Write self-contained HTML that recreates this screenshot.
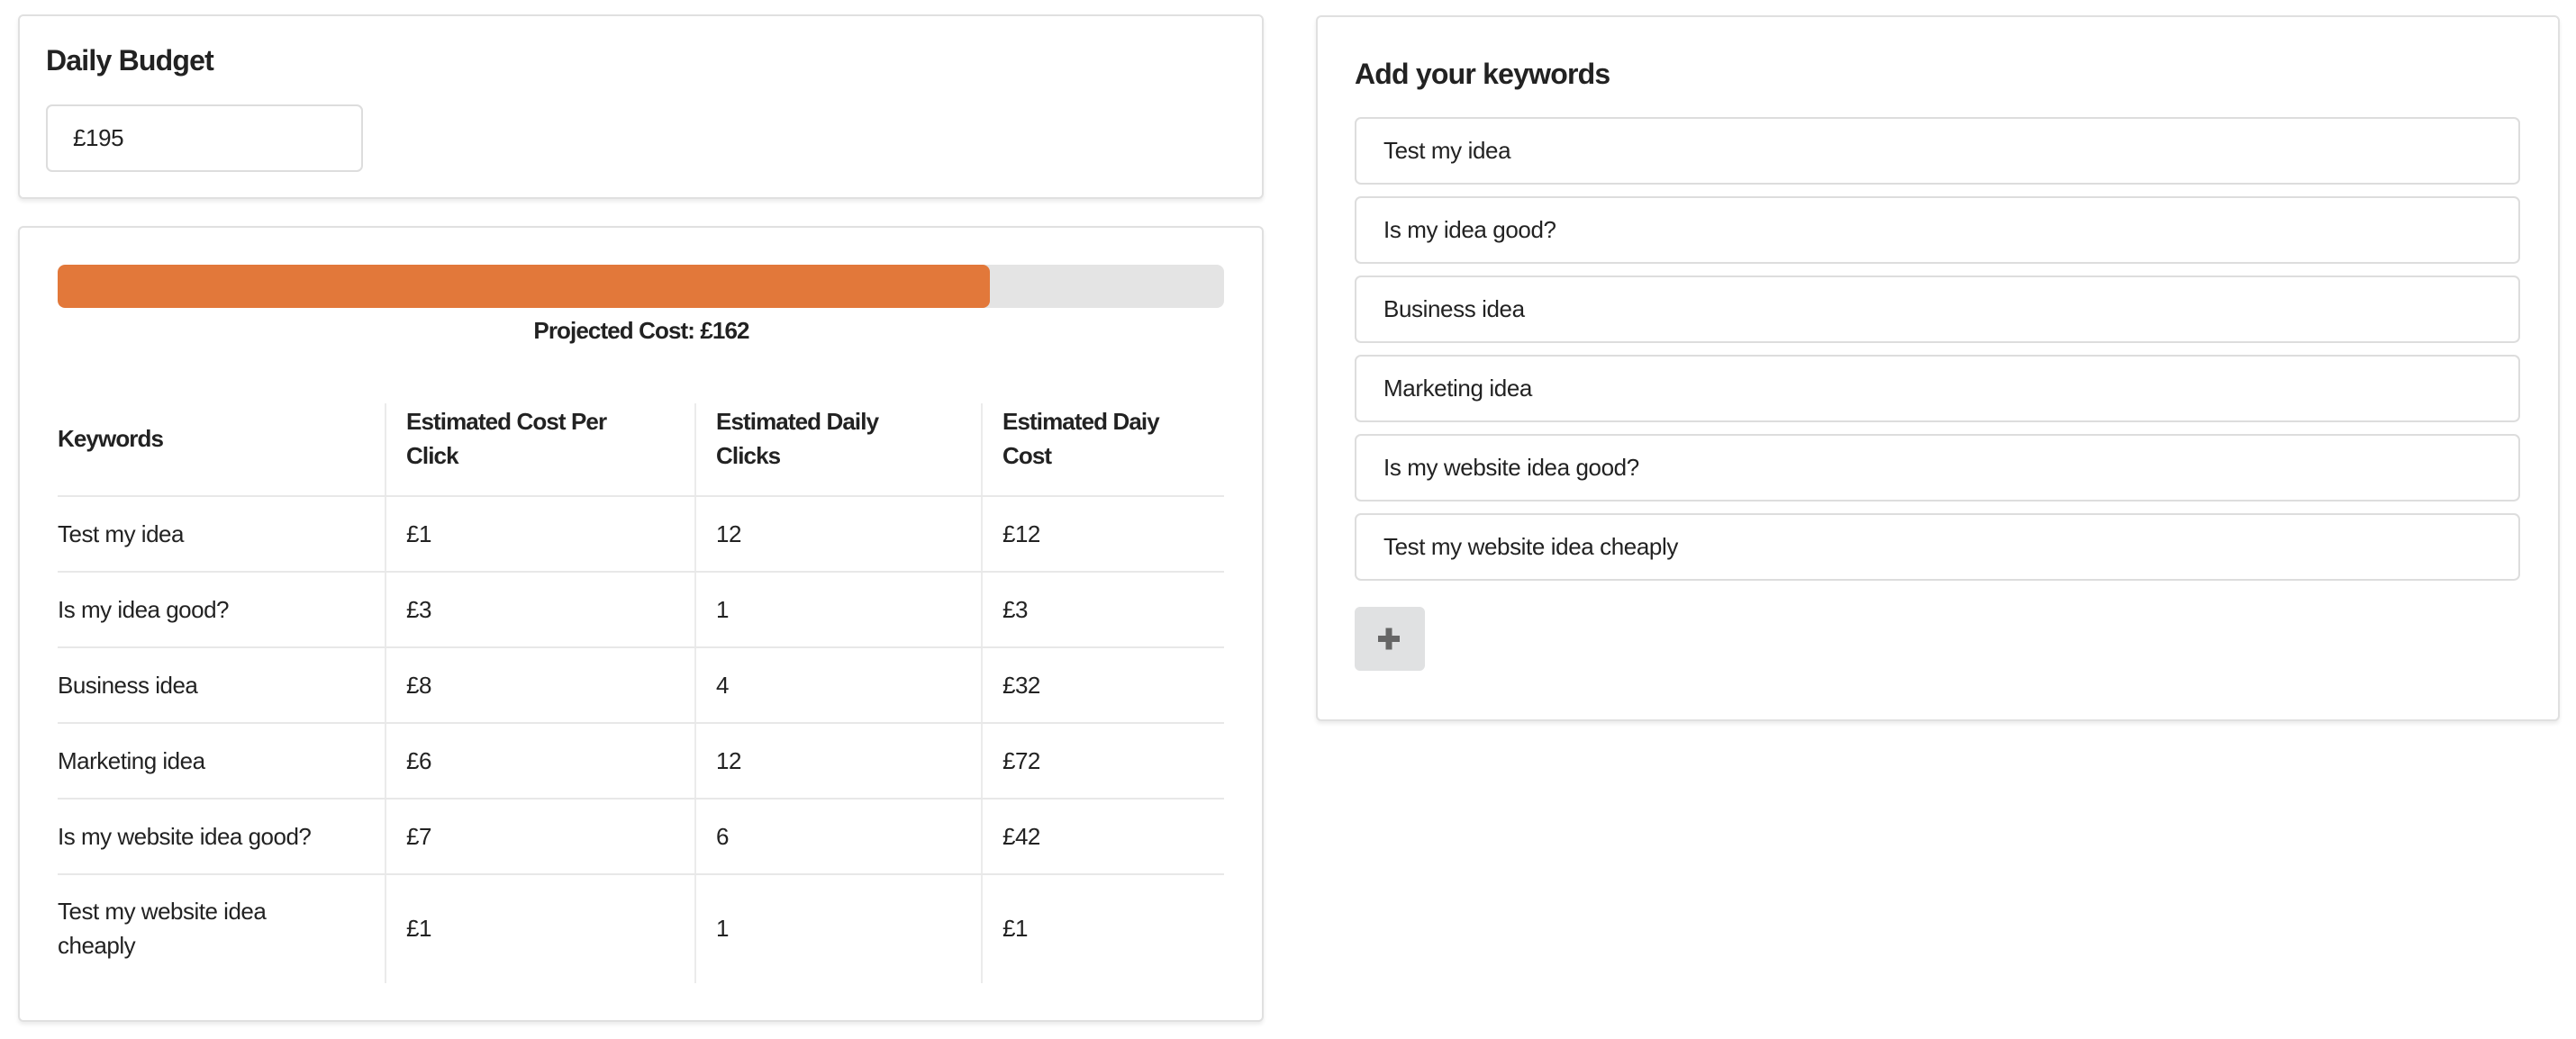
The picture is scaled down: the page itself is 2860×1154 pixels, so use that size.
<!DOCTYPE html>
<html><head><meta charset="utf-8"><style>
*{box-sizing:border-box;margin:0;padding:0}
body{width:2860px;height:1154px;background:#fff;font-family:"Liberation Sans",sans-serif;color:#222;position:relative;overflow:hidden}
.card{position:absolute;background:#fff;border:2px solid #e0e0e0;border-radius:6px;box-shadow:0 3px 4px rgba(0,0,0,0.08)}
.h{position:absolute;font-weight:bold;font-size:32px;letter-spacing:-0.8px;color:#222;line-height:1}
.inp{position:absolute;border:2px solid #ddd;border-radius:7px;background:#fff;font-size:26px;padding-left:30px;display:flex;align-items:center;color:#222;letter-spacing:-0.4px}
.bar{position:absolute;left:64px;top:294px;width:1295px;height:48px;background:#e4e4e4;border-radius:8px;overflow:hidden}
.bar div{width:1035px;height:100%;background:#e2783a;border-radius:8px}
.t{position:absolute;font-size:26px;line-height:38px;color:#222;letter-spacing:-0.5px}
.b{font-weight:bold;letter-spacing:-0.9px}
.hl{position:absolute;left:64px;width:1295px;height:2px;background:#e8e8e8}
.vl{position:absolute;width:2px;top:448px;height:644px;background:#ebebeb}
</style></head><body>
<div class="card" style="left:20px;top:16px;width:1383px;height:205px"></div>
<div class="h" style="left:51px;top:51px">Daily Budget</div>
<div class="inp" style="left:51px;top:116px;width:352px;height:75px;padding-left:28px">£195</div>

<div class="card" style="left:20px;top:251px;width:1383px;height:884px"></div>
<div class="bar"><div></div></div>
<div class="t b" style="left:0;width:1424px;text-align:center;top:348px">Projected Cost: £162</div>

<div class="vl" style="left:427px"></div>
<div class="vl" style="left:771px"></div>
<div class="vl" style="left:1089px"></div>
<div class="hl" style="top:550px"></div>
<div class="hl" style="top:634px"></div>
<div class="hl" style="top:718px"></div>
<div class="hl" style="top:802px"></div>
<div class="hl" style="top:886px"></div>
<div class="hl" style="top:970px"></div>

<div class="t b" style="left:64px;top:468px">Keywords</div>
<div class="t b" style="left:451px;top:449px">Estimated Cost Per<br>Click</div>
<div class="t b" style="left:795px;top:449px">Estimated Daily<br>Clicks</div>
<div class="t b" style="left:1113px;top:449px">Estimated Daiy<br>Cost</div>

<div class="t" style="left:64px;top:574px">Test my idea</div><div class="t" style="left:451px;top:574px">£1</div><div class="t" style="left:795px;top:574px">12</div><div class="t" style="left:1113px;top:574px">£12</div>
<div class="t" style="left:64px;top:658px">Is my idea good?</div><div class="t" style="left:451px;top:658px">£3</div><div class="t" style="left:795px;top:658px">1</div><div class="t" style="left:1113px;top:658px">£3</div>
<div class="t" style="left:64px;top:742px">Business idea</div><div class="t" style="left:451px;top:742px">£8</div><div class="t" style="left:795px;top:742px">4</div><div class="t" style="left:1113px;top:742px">£32</div>
<div class="t" style="left:64px;top:826px">Marketing idea</div><div class="t" style="left:451px;top:826px">£6</div><div class="t" style="left:795px;top:826px">12</div><div class="t" style="left:1113px;top:826px">£72</div>
<div class="t" style="left:64px;top:910px">Is my website idea good?</div><div class="t" style="left:451px;top:910px">£7</div><div class="t" style="left:795px;top:910px">6</div><div class="t" style="left:1113px;top:910px">£42</div>
<div class="t" style="left:64px;top:993px">Test my website idea<br>cheaply</div><div class="t" style="left:451px;top:1012px">£1</div><div class="t" style="left:795px;top:1012px">1</div><div class="t" style="left:1113px;top:1012px">£1</div>

<div class="card" style="left:1461px;top:17px;width:1381px;height:784px"></div>
<div class="h" style="left:1504px;top:66px">Add your keywords</div>
<div class="inp" style="left:1504px;top:130px;width:1294px;height:75px">Test my idea</div>
<div class="inp" style="left:1504px;top:218px;width:1294px;height:75px">Is my idea good?</div>
<div class="inp" style="left:1504px;top:306px;width:1294px;height:75px">Business idea</div>
<div class="inp" style="left:1504px;top:394px;width:1294px;height:75px">Marketing idea</div>
<div class="inp" style="left:1504px;top:482px;width:1294px;height:75px">Is my website idea good?</div>
<div class="inp" style="left:1504px;top:570px;width:1294px;height:75px">Test my website idea cheaply</div>
<div style="position:absolute;left:1504px;top:674px;width:78px;height:71px;background:#e0e1e2;border-radius:6px">
<svg width="78" height="71" viewBox="0 0 78 71"><path d="M38 23.5v24M26 35.5h24" stroke="#666" stroke-width="7"/></svg>
</div>
</body></html>
